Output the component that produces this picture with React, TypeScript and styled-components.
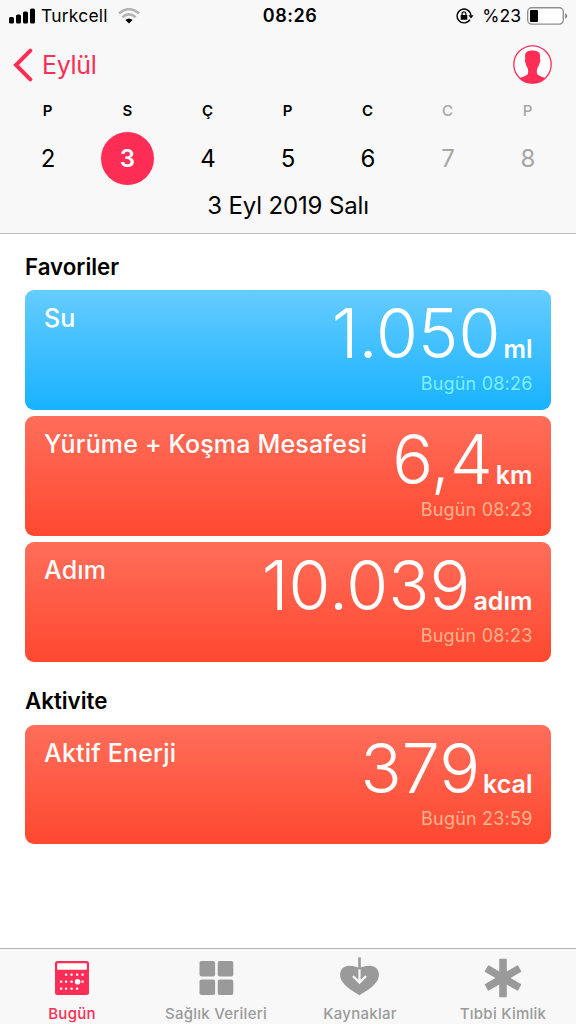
import React from "react";
import styled, { createGlobalStyle } from "styled-components";

const PINK = "#fd2d55";
const GRAY = "#9a9a9a";

const GlobalStyle = createGlobalStyle`
  * { box-sizing: border-box; }
  body {
    margin: 0;
    background: #ffffff;
    color: #000000;
    font-family: Inter, "Liberation Sans", sans-serif;
  }
  svg { display: block; flex: none; }
`;

const Screen = styled.div`
  display: flex;
  flex-direction: column;
  width: 576px;
  height: 1024px;
  overflow: hidden;
  background: #ffffff;
`;

const Header = styled.header`
  flex: none;
  height: 234px;
  background: #f8f8f8;
  border-bottom: 1px solid #bdbdbd;
`;

const StatusBar = styled.div`
  display: grid;
  grid-template-columns: 1fr auto 1fr;
  height: 32px;
  padding: 0 8px 0 9px;
  font-size: 17.5px;
  line-height: 32px;
`;

const StatusGroup = styled.div<{ $end?: boolean }>`
  display: flex;
  align-items: center;
  justify-content: ${(p) => (p.$end ? "flex-end" : "flex-start")};
`;

const Carrier = styled.span`
  margin: 0 10px 0 6px;
  letter-spacing: 0.2px;
`;

const Clock = styled.span`
  margin-left: 3px;
  font-size: 18px;
  font-weight: 600;
  letter-spacing: 0.5px;
`;

const BatteryLevel = styled.span`
  margin: 0 6px 0 8px;
`;

const NavBar = styled.nav`
  display: flex;
  align-items: center;
  justify-content: space-between;
  height: 65px;
  padding: 0 24px 0 13px;
`;

const BackButton = styled.a`
  display: flex;
  align-items: center;
  gap: 9px;
  color: ${PINK};
  font-size: 25px;
  letter-spacing: -0.3px;
  line-height: 30px;
`;

const Week = styled.div`
  display: grid;
  grid-template-columns: repeat(7, 80px);
  justify-content: center;
`;

const Day = styled.div<{ $muted?: boolean }>`
  display: flex;
  flex-direction: column;
  align-items: center;
  color: ${(p) => (p.$muted ? "#a6a6a6" : "#000000")};
`;

const DayLetter = styled.span<{ $muted?: boolean }>`
  margin-right: 1px;
  font-size: 15px;
  font-weight: ${(p) => (p.$muted ? 500 : 600)};
  line-height: 28px;
`;

const DayNumber = styled.span<{ $selected?: boolean }>`
  width: 53px;
  height: 53px;
  margin: 7px ${(p) => (p.$selected ? "1px" : "0")} 0 0;
  border-radius: 50%;
  background: ${(p) => (p.$selected ? PINK : "transparent")};
  color: ${(p) => (p.$selected ? "#ffffff" : "inherit")};
  font-size: 24px;
  font-weight: ${(p) => (p.$selected ? 600 : 400)};
  line-height: 53px;
  text-align: center;
`;

const FullDate = styled.div`
  font-size: 24px;
  letter-spacing: -0.15px;
  line-height: 41px;
  text-align: center;
`;

const Content = styled.main`
  flex: 1;
  padding: 17.5px 25px 0 25px;
`;

const Section = styled.section`
  margin-bottom: 24.5px;
`;

const SectionTitle = styled.h2`
  margin: 0 0 8.5px;
  font-size: 22.3px;
  font-weight: 600;
  line-height: 30px;
`;

const CardList = styled.div`
  display: flex;
  flex-direction: column;
  gap: 6.5px;
`;

type Tone = "water" | "activity";

const tones = {
  water: { background: "linear-gradient(#66ccff, #18b2ff)", stamp: "#7cf0ff" },
  activity: { background: "linear-gradient(#ff6e5a, #ff4830)", stamp: "#ffb38e" },
};

const CardBox = styled.article<{ $tone: Tone }>`
  display: grid;
  grid-template-columns: auto 1fr;
  height: 119.5px;
  padding: 12px 18.5px 0 19px;
  border-radius: 9px;
  background: ${(p) => tones[p.$tone].background};
  color: #ffffff;
`;

const CardName = styled.h3`
  margin: 0;
  font-size: 25px;
  font-weight: 500;
  letter-spacing: 0.17px;
  line-height: 32px;
  white-space: nowrap;
`;

const Reading = styled.div`
  display: flex;
  flex-direction: column;
  align-items: flex-end;
`;

const Measure = styled.div`
  display: flex;
  align-items: baseline;
  gap: 3px;
  height: 66px;
  line-height: 62px;
  white-space: nowrap;
`;

const Amount = styled.span`
  font-size: 68px;
  font-weight: 300;
`;

const Unit = styled.span`
  font-size: 25px;
  font-weight: 600;
`;

const Stamp = styled.span<{ $tone: Tone }>`
  color: ${(p) => tones[p.$tone].stamp};
  font-size: 18px;
  letter-spacing: 0.2px;
  line-height: 31px;
`;

const TabBar = styled.footer`
  display: grid;
  flex: none;
  grid-template-columns: repeat(4, 1fr);
  height: 76px;
  border-top: 1px solid #b5b5b5;
  background: #f8f8f8;
`;

const Tab = styled.a<{ $active?: boolean }>`
  display: flex;
  flex-direction: column;
  align-items: center;
  padding-top: 8px;
  color: ${(p) => (p.$active ? PINK : GRAY)};
  font-size: 15px;
  font-weight: 500;
  letter-spacing: 0.25px;
  line-height: 14px;

  &:last-child {
    padding-right: 2px;
  }
`;

const TabLabel = styled.span`
  margin-top: 8px;
`;

const SignalIcon = () => (
  <svg width="26" height="16" viewBox="0 0 26 16">
    <rect x="0" y="9" width="5" height="6.5" rx="1.6" />
    <rect x="7" y="6.5" width="5" height="9" rx="1.6" />
    <rect x="14" y="3.5" width="5" height="12" rx="1.6" />
    <rect x="21" y="0.5" width="5" height="15" rx="1.6" />
  </svg>
);

const WifiIcon = () => (
  <svg width="22" height="16" viewBox="0 0 22 16" fill="none">
    <path d="M1 5.6Q11 -3.2 21 5.6" stroke="#b4b4b4" strokeWidth="2.7" />
    <path d="M4.4 9.2Q11 3.6 17.6 9.2" stroke="#b4b4b4" strokeWidth="2.6" />
    <path d="M7.4 12Q11 8.8 14.6 12L11 15.6Z" fill="#000" />
  </svg>
);

const RotationLockIcon = () => (
  <svg width="18" height="16" viewBox="0 0 18 16" fill="none">
    <path d="M13.9 11.6A6.9 6.9 0 1 1 14.9 7.4" stroke="#000" strokeWidth="1.4" />
    <path d="M12.4 7.2H17.6L15 10.6Z" fill="#000" />
    <rect x="4.7" y="7" width="6.6" height="4.8" rx="0.6" fill="#000" />
    <path d="M6.1 7.2V5.7a1.9 1.9 0 0 1 3.8 0V7.2" stroke="#000" strokeWidth="1.2" />
  </svg>
);

const BatteryIcon = () => (
  <svg width="41" height="18" viewBox="0 0 41 18" fill="none">
    <rect x="0.7" y="0.7" width="35.6" height="16.4" rx="4" fill="#fff" stroke="#8f8f8f" strokeWidth="1.4" />
    <rect x="3" y="3" width="8" height="12" rx="1" fill="#000" />
    <path d="M38 6Q40.4 7.4 40.4 9T38 12Z" fill="#8f8f8f" />
  </svg>
);

const ChevronIcon = () => (
  <svg width="20" height="34" viewBox="0 0 20 34" fill="none">
    <path d="M17.3 2.7L3 17L17.3 31.3" stroke={PINK} strokeWidth="4" strokeLinecap="round" strokeLinejoin="miter" />
  </svg>
);

const ProfileIcon = () => (
  <svg width="39" height="39" viewBox="0 0 39 39">
    <circle cx="19.5" cy="19.5" r="18.7" fill="#fff" stroke={PINK} strokeWidth="1.3" />
    <path
      d="M12.2 9.6C12.6 6.7 15.8 5.5 19.5 5.5S26.6 6.8 27 9.8C27.2 11.4 27 12.6 26.9 14C27.7 14.4 27.4 17 26.5 18.3C26 20.6 25 22.4 24.2 23.5C23.8 25.3 23.7 27 24 28.6C25 31.2 29.8 31.8 32.2 33.2A18.7 18.7 0 0 1 6.8 33.2C9.2 31.8 14 31.2 15 28.6C15.3 27 15.2 25.3 14.8 23.5C14 22.4 13 20.6 12.7 18.3C11.8 17 11.5 14.4 12.3 14C12.1 12.6 12 11.2 12.2 9.6Z"
      fill={PINK}
    />
  </svg>
);

const CALENDAR_DOTS = [
  [11.5, 14], [17, 14], [22.5, 14], [28, 14],
  [6.5, 21], [11.5, 21], [17, 21], [28, 21],
  [6.5, 28], [11.5, 28], [17, 28], [22.5, 28],
];

const TodayIcon = () => (
  <svg width="36" height="42" viewBox="0 0 36 42">
    <rect x="1" y="4" width="34" height="34" rx="2.5" fill={PINK} />
    <rect x="3.2" y="6.2" width="29.6" height="6.6" rx="0.8" fill="#fff" />
    {CALENDAR_DOTS.map(([x, y]) => (
      <rect key={`${x}-${y}`} x={x - 0.5} y={y + 2.6} width="2.2" height="2.2" rx="0.6" fill="#fff" />
    ))}
    <circle cx="23.6" cy="24.7" r="2.8" fill="#fff" />
  </svg>
);

const DataIcon = () => (
  <svg width="36" height="42" viewBox="0 0 36 42" fill={GRAY}>
    <rect x="1.5" y="4" width="15.6" height="15.6" rx="2" />
    <rect x="19.7" y="4" width="15.6" height="15.6" rx="2" />
    <rect x="1.5" y="22.4" width="15.6" height="15.6" rx="2" />
    <rect x="19.7" y="22.4" width="15.6" height="15.6" rx="2" />
  </svg>
);

const SourcesIcon = () => (
  <svg width="40" height="42" viewBox="0 0 40 42" fill="none">
    <path
      d="M19.5 38.2C13.5 34.5 0.1 27.6 0.1 17.8C0.1 12.4 3.9 8.8 8.9 8.8C13.5 8.8 17.1 9.6 19.5 11.6C21.9 9.6 25.5 8.8 30.1 8.8C35.1 8.8 38.9 12.4 38.9 17.8C38.9 27.6 25.5 34.5 19.5 38.2Z"
      fill={GRAY}
    />
    <path d="M19.5 12V25.5M12.9 19L19.5 25.6L26.1 19" stroke="#f8f8f8" strokeWidth="2.2" />
    <path d="M19.5 0.4V12.4" stroke={GRAY} strokeWidth="2.6" />
  </svg>
);

const MedicalIcon = () => (
  <svg width="38" height="42" viewBox="0 0 38 42" fill={GRAY}>
    {[0, 60, 120].map((angle) => (
      <rect key={angle} x="15.2" y="1.8" width="7.6" height="38.4" rx="0.8" transform={`rotate(${angle} 19 21)`} />
    ))}
  </svg>
);

interface Metric {
  name: string;
  amount: string;
  unit: string;
  stamp: string;
  tone: Tone;
}

const favorites: Metric[] = [
  { name: "Su", amount: "1.050", unit: "ml", stamp: "Bugün 08:26", tone: "water" },
  { name: "Yürüme + Koşma Mesafesi", amount: "6,4", unit: "km", stamp: "Bugün 08:23", tone: "activity" },
  { name: "Adım", amount: "10.039", unit: "adım", stamp: "Bugün 08:23", tone: "activity" },
];

const activity: Metric[] = [
  { name: "Aktif Enerji", amount: "379", unit: "kcal", stamp: "Bugün 23:59", tone: "activity" },
];

const days = [
  { letter: "P", number: 2 },
  { letter: "S", number: 3, selected: true },
  { letter: "Ç", number: 4 },
  { letter: "P", number: 5 },
  { letter: "C", number: 6 },
  { letter: "C", number: 7, muted: true },
  { letter: "P", number: 8, muted: true },
];

const MetricSection = ({ title, metrics }: { title: string; metrics: Metric[] }) => (
  <Section>
    <SectionTitle>{title}</SectionTitle>
    <CardList>
      {metrics.map((m) => (
        <CardBox key={m.name} $tone={m.tone}>
          <CardName>{m.name}</CardName>
          <Reading>
            <Measure>
              <Amount>{m.amount}</Amount>
              <Unit>{m.unit}</Unit>
            </Measure>
            <Stamp $tone={m.tone}>{m.stamp}</Stamp>
          </Reading>
        </CardBox>
      ))}
    </CardList>
  </Section>
);

export default function App() {
  return (
    <>
      <GlobalStyle />
      <Screen>
        <Header>
          <StatusBar>
            <StatusGroup>
              <SignalIcon />
              <Carrier>Turkcell</Carrier>
              <WifiIcon />
            </StatusGroup>
            <Clock>08:26</Clock>
            <StatusGroup $end>
              <RotationLockIcon />
              <BatteryLevel>%23</BatteryLevel>
              <BatteryIcon />
            </StatusGroup>
          </StatusBar>
          <NavBar>
            <BackButton>
              <ChevronIcon />
              Eylül
            </BackButton>
            <ProfileIcon />
          </NavBar>
          <Week>
            {days.map((d) => (
              <Day key={d.number} $muted={d.muted}>
                <DayLetter $muted={d.muted}>{d.letter}</DayLetter>
                <DayNumber $selected={d.selected}>{d.number}</DayNumber>
              </Day>
            ))}
          </Week>
          <FullDate>3 Eyl 2019 Salı</FullDate>
        </Header>
        <Content>
          <MetricSection title="Favoriler" metrics={favorites} />
          <MetricSection title="Aktivite" metrics={activity} />
        </Content>
        <TabBar>
          <Tab $active>
            <TodayIcon />
            <TabLabel>Bugün</TabLabel>
          </Tab>
          <Tab>
            <DataIcon />
            <TabLabel>Sağlık Verileri</TabLabel>
          </Tab>
          <Tab>
            <SourcesIcon />
            <TabLabel>Kaynaklar</TabLabel>
          </Tab>
          <Tab>
            <MedicalIcon />
            <TabLabel>Tıbbi Kimlik</TabLabel>
          </Tab>
        </TabBar>
      </Screen>
    </>
  );
}
